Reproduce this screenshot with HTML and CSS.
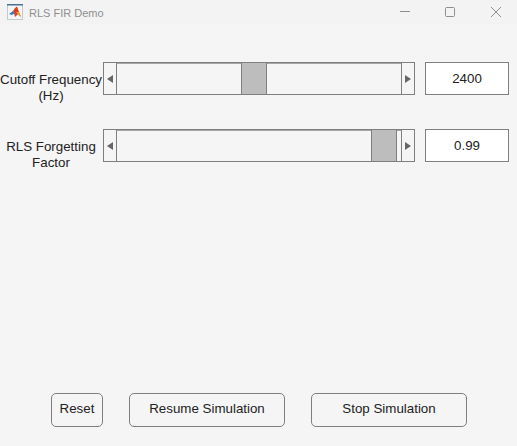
FILE: index.html
```html
<!DOCTYPE html>
<html lang="en">
<head>
    <meta charset="UTF-8">
    <meta name="viewport" content="width=device-width, initial-scale=1.0">
    <title>RLS FIR Demo</title>
    <link rel="stylesheet" href="styles.css">
</head>
<body>
    <div class="titlebar">
        <svg class="app-icon" width="16" height="16" viewBox="0 0 16 16">
            <rect x="0.5" y="0.5" width="15" height="15" fill="#f4f5f6" stroke="#c3c8cd"/>
            <rect x="0" y="0" width="16" height="1.5" fill="#4a7191"/>
            <polygon points="2,10 6,7 8,9 5,11" fill="#2f7fc4"/>
            <polygon points="6,7 8,4 10,2.5 12,8 14,13 11,10 8,13 7,9" fill="#d9401f"/>
            <polygon points="9,8 12,8 14,13 11,10" fill="#f0a030"/>
        </svg>
        <span class="window-title">RLS FIR Demo</span>
        <div class="window-controls">
            <svg width="12" height="12" viewBox="0 0 12 12"><path d="M1 5.5H11" stroke="#8f8f8f"/></svg>
            <svg width="12" height="12" viewBox="0 0 12 12"><rect x="1.5" y="1.5" width="9" height="9" rx="1" fill="none" stroke="#8f8f8f"/></svg>
            <svg class="close-icon" width="12" height="12" viewBox="0 0 12 12"><path d="M1 1L11 11M11 1L1 11" stroke="#8f8f8f"/></svg>
        </div>
    </div>

    <div class="controls">
        <div class="control-row">
            <label class="control-label">Cutoff Frequency (Hz)</label>
            <div class="slider">
                <div class="slider-arrow"><span class="tri-left"></span></div>
                <div class="slider-track">
                    <div style="width: 124px"></div>
                    <div class="slider-thumb"></div>
                </div>
                <div class="slider-arrow"><span class="tri-right"></span></div>
            </div>
            <div class="value-box">2400</div>
        </div>
        <div class="control-row">
            <label class="control-label">RLS Forgetting Factor</label>
            <div class="slider">
                <div class="slider-arrow"><span class="tri-left"></span></div>
                <div class="slider-track">
                    <div style="width: 254px"></div>
                    <div class="slider-thumb"></div>
                </div>
                <div class="slider-arrow"><span class="tri-right"></span></div>
            </div>
            <div class="value-box">0.99</div>
        </div>
    </div>

    <div class="actions">
        <button class="btn btn-small">Reset</button>
        <button class="btn">Resume Simulation</button>
        <button class="btn">Stop Simulation</button>
    </div>
</body>
</html>
```

FILE: styles.css
```css
html, body {
    height: 100%;
}

body {
    margin: 0;
    display: flex;
    flex-direction: column;
    box-sizing: border-box;
    background: #f5f5f5;
    color: #222;
    font-family: "Liberation Sans", Arial, sans-serif;
    font-size: 12px;
}

.titlebar {
    display: flex;
    align-items: center;
    height: 24px;
    padding-left: 7px;
    background: #f3f3f3;
}

.app-icon {
    margin-right: 6px;
}

.window-title {
    color: #8f8f8f;
    font-size: 11px;
    padding-top: 1px;
}

.window-controls {
    display: flex;
    gap: 33px;
    margin-left: auto;
    margin-right: 15px;
}

.close-icon {
    margin-left: 1px;
}

.controls {
    display: flex;
    flex-direction: column;
    gap: 25px;
    padding-top: 38px;
}

.control-row {
    display: flex;
    align-items: flex-start;
}

.control-label {
    width: 102px;
    margin-top: 10px;
    margin-right: 1px;
    text-align: center;
    line-height: 16px;
    font-size: 13.33px;
}

.slider {
    display: flex;
    box-sizing: border-box;
    width: 312px;
    height: 33px;
    border: 1px solid #7f7f7f;
}

.slider-arrow {
    display: flex;
    align-items: center;
    justify-content: center;
    width: 12px;
}

.tri-left, .tri-right {
    width: 0;
    height: 0;
    border-top: 4px solid transparent;
    border-bottom: 4px solid transparent;
}

.tri-left {
    border-right: 6px solid #666;
}

.tri-right {
    border-left: 6px solid #666;
}

.slider-track {
    display: flex;
    flex: 1;
    border-left: 1px solid #7f7f7f;
    border-right: 1px solid #7f7f7f;
    box-shadow: inset 0 1px #a6a6a6;
}

.slider-thumb {
    box-sizing: border-box;
    width: 26px;
    background: #bdbdbd;
    border-left: 1px solid #7f7f7f;
    border-right: 1px solid #7f7f7f;
}

.value-box {
    box-sizing: border-box;
    width: 84px;
    height: 33px;
    margin-left: 10px;
    background: #fff;
    border: 1px solid #7f7f7f;
    text-align: center;
    line-height: 31px;
    font-size: 13.33px;
}

.actions {
    display: flex;
    gap: 26px;
    margin-top: auto;
    padding: 0 0 19px 51px;
}

.btn {
    box-sizing: border-box;
    width: 156px;
    height: 34px;
    padding: 0 0 4px;
    background: #f5f5f5;
    border: 1px solid #7f7f7f;
    border-radius: 5px;
    color: #222;
    font-family: inherit;
    font-size: 13.33px;
}

.btn-small {
    width: 52px;
}
```
